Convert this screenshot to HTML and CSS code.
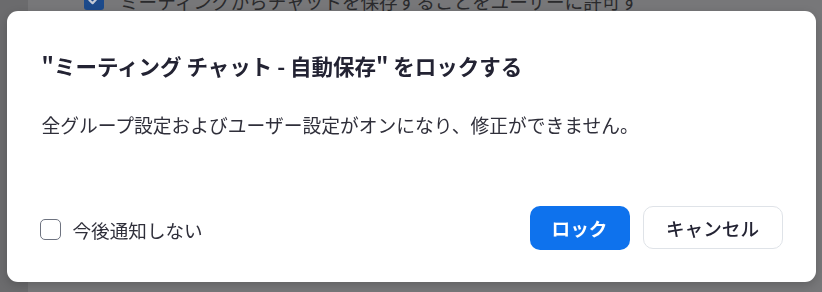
FILE: index.html
```html
<!DOCTYPE html>
<html lang="ja">
<head>
<meta charset="utf-8">
<title>ロック</title>
<link rel="stylesheet" href="styles.css">
</head>
<body>
<div class="page">
  <div class="sidebar"></div>
  <div class="main">
    <div class="setting-row">
      <span class="bg-check">
        <svg width="14" height="14" viewBox="0 0 14 14"><path d="M2.5 7.2 L5.6 10.2 L11.5 3.8" fill="none" stroke="#c3cad6" stroke-width="2.2" stroke-linecap="round" stroke-linejoin="round"/></svg>
      </span>
      <span class="bg-text">ミーティングからチャットを保存することをユーザーに許可す</span>
    </div>
  </div>
</div>
<div class="overlay">
  <div class="dialog" role="dialog">
    <h1 class="dialog-title">"ミーティング チャット - 自動保存" をロックする</h1>
    <p class="dialog-body">全グループ設定およびユーザー設定がオンになり、修正ができません。</p>
    <div class="dialog-footer">
      <label class="dont-show">
        <span class="checkbox"></span>
        <span class="dont-show-text">今後通知しない</span>
      </label>
      <div class="actions">
        <button class="btn btn-primary">ロック</button>
        <button class="btn btn-secondary">キャンセル</button>
      </div>
    </div>
  </div>
</div>
</body>
</html>
```

FILE: styles.css
```css
* { box-sizing: border-box; }
html, body { margin: 0; padding: 0; height: 100%; }
body {
  background: #777779;
  font-family: "Noto Sans CJK JP", "Noto Sans", sans-serif;
  overflow: hidden;
}
.page {
  display: flex;
  height: 100%;
}
.sidebar {
  width: 28px;
  background: #6b6b6d;
  flex: none;
}
.main {
  flex: 1;
  padding-left: 56px;
}
.setting-row {
  display: flex;
  align-items: center;
  gap: 16px;
  margin-top: -11px;
  height: 22px;
}
.bg-check {
  width: 20px;
  height: 20px;
  border-radius: 3px;
  background: #1c4a8b;
  display: flex;
  align-items: center;
  justify-content: center;
}
.bg-text {
  font-size: 18.6px;
  color: #2a2a2c;
  white-space: nowrap;
}
.overlay {
  position: fixed;
  inset: 0;
  display: flex;
  align-items: center;
  justify-content: center;
}
.dialog {
  width: 809px;
  background: #ffffff;
  border-radius: 11px;
  padding: 40px 33px 32px 35px;
  box-shadow: 0 3px 10px rgba(0, 0, 0, 0.18);
}
.dialog-title {
  margin: 0;
  font-size: 21.5px;
  line-height: 30px;
  font-weight: 700;
  color: #232333;
}
.dialog-body {
  margin: 31px 0 0;
  font-size: 18.75px;
  line-height: 26px;
  color: #2f2f3a;
}
.dialog-footer {
  margin-top: 68px;
  display: flex;
  align-items: center;
  justify-content: space-between;
}
.dont-show {
  display: flex;
  align-items: center;
  gap: 12px;
  margin-left: -2px;
  padding-top: 4px;
}
.checkbox {
  width: 21px;
  height: 21px;
  border: 1.5px solid #6e7380;
  border-radius: 5px;
  background: #fff;
}
.dont-show-text {
  font-size: 18.6px;
  color: #2f2f3a;
}
.actions {
  display: flex;
  gap: 13px;
  align-items: center;
}
.btn {
  font-family: inherit;
  font-size: 18.6px;
  height: 44px;
  border-radius: 10px;
  cursor: pointer;
}
.btn-primary {
  width: 100px;
  background: #0e72ed;
  color: #ffffff;
  border: none;
  font-weight: 700;
}
.btn-secondary {
  width: 140px;
  height: 43px;
  background: #ffffff;
  color: #232333;
  border: 1px solid #dfe3e8;
  font-weight: 500;
}
```
